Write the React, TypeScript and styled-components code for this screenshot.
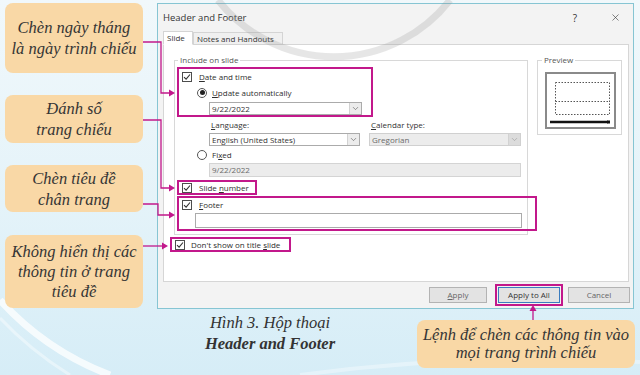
import React from "react";
import styled, { createGlobalStyle } from "styled-components";
import { ChevronDown, X } from "lucide-react";

const GlobalStyle = createGlobalStyle`
  html, body {
    margin: 0;
    padding: 0;
  }
  body {
    width: 640px;
    height: 375px;
    overflow: hidden;
  }
  * {
    box-sizing: border-box;
  }
`;

const INK = "#c2188b";

const Page = styled.div`
  position: relative;
  width: 640px;
  height: 375px;
  overflow: hidden;
  background: linear-gradient(180deg, #f1f8fb 0%, #e4f3f9 55%, #d6edf7 100%);
  font-family: "Open Sans", "Noto Sans", sans-serif;
`;

const Decor = styled.svg<{ $top?: boolean }>`
  position: absolute;
  left: 0;
  top: 0;
  width: 640px;
  height: 375px;
  pointer-events: none;
  z-index: ${(p) => (p.$top ? 2 : 0)};
`;

const Content = styled.div`
  position: relative;
  z-index: 1;
  display: flex;
  flex-direction: column;
  padding-top: 3px;
`;

const TopRow = styled.div`
  display: flex;
  align-items: flex-start;
`;

const CalloutColumn = styled.div`
  display: flex;
  flex-direction: column;
  width: 138px;
  margin-left: 5px;
  margin-right: 14px;
`;

const Callout = styled.div<{ $h: number; $mt?: number; $lh?: number }>`
  height: ${(p) => p.$h}px;
  margin-top: ${(p) => p.$mt ?? 0}px;
  background: #f9d8a6;
  border-radius: 8px;
  display: flex;
  align-items: center;
  justify-content: center;
  text-align: center;
  font-family: "Liberation Serif", "DejaVu Serif", serif;
  font-style: italic;
  font-size: 16.5px;
  line-height: ${(p) => p.$lh ?? 21}px;
  color: #353535;
`;

/* ---------- dialog ---------- */

const Dialog = styled.div`
  width: 477px;
  height: 306px;
  background: #f3f3f3;
  border: 1px solid #86c5d3;
  display: flex;
  flex-direction: column;
  color: #2e2e2e;
  font-size: 8px;
  line-height: 10px;
`;

const TitleBar = styled.div`
  height: 27px;
  flex: none;
  display: flex;
  align-items: center;
  padding-left: 5px;
  font-size: 9.5px;
  color: #333;
`;

const TitleText = styled.span`
  flex: 1;
`;

const TitleButton = styled.span<{ $mr: number }>`
  width: 30px;
  height: 20px;
  margin-right: ${(p) => p.$mr}px;
  display: flex;
  align-items: center;
  justify-content: center;
  font-size: 10px;
  color: #333;
`;

const TabRow = styled.div`
  display: flex;
  height: 14px;
  margin-left: 5px;
  margin-bottom: -1px;
  align-items: flex-end;
`;

const Tab = styled.div<{ $active?: boolean; $w: number }>`
  position: relative;
  z-index: ${(p) => (p.$active ? 1 : 0)};
  width: ${(p) => p.$w}px;
  height: ${(p) => (p.$active ? 14 : 13)}px;
  background: ${(p) => (p.$active ? "#fff" : "#f0f0f0")};
  border: 1px solid #d4d4d4;
  border-bottom-color: ${(p) => (p.$active ? "#fff" : "#d4d4d4")};
  display: flex;
  align-items: center;
  padding-left: 3px;
  color: #333;
`;

const Panel = styled.div`
  height: 238px;
  margin: 0 4px 0 5px;
  background: #fff;
  border: 1px solid #d6d6d6;
  padding: 10px 0 0 10px;
  display: flex;
  flex-direction: column;
`;

const GroupRow = styled.div`
  display: flex;
  align-items: flex-start;
`;

const Group = styled.fieldset<{ $w: number; $pl: number; $pb: number }>`
  margin: 0;
  min-width: 0;
  width: ${(p) => p.$w}px;
  padding: 2px 0 ${(p) => p.$pb}px ${(p) => p.$pl}px;
  border: 1px solid #d8d8d8;
`;

const Legend = styled.legend`
  margin-left: 1px;
  padding: 0 2px;
  font-size: 8px;
  line-height: 10px;
  color: #555;
`;

const Highlight = styled.div<{ $w: number; $mt?: number; $ml?: number; $pad?: string }>`
  width: ${(p) => p.$w}px;
  margin-top: ${(p) => p.$mt ?? 0}px;
  margin-left: ${(p) => p.$ml ?? 0}px;
  padding: ${(p) => p.$pad ?? "0 0 0 3px"};
  border: 2px solid ${INK};
`;

const Row = styled.div<{ $gap: number; $ml?: number; $mt?: number }>`
  display: flex;
  align-items: center;
  height: 11px;
  gap: ${(p) => p.$gap}px;
  margin-left: ${(p) => p.$ml ?? 0}px;
  margin-top: ${(p) => p.$mt ?? 0}px;
  white-space: nowrap;
`;

const Box = styled.span`
  width: 10px;
  height: 10px;
  flex: none;
  border: 1px solid #4d4d4d;
  background: #fff;
  display: flex;
  align-items: center;
  justify-content: center;
`;

const Radio = styled.span<{ $on?: boolean }>`
  width: 10px;
  height: 10px;
  flex: none;
  border-radius: 50%;
  border: 1px solid #555;
  background: #fff;
  display: flex;
  align-items: center;
  justify-content: center;
  &::after {
    content: "";
    display: ${(p) => (p.$on ? "block" : "none")};
    width: 5px;
    height: 5px;
    border-radius: 50%;
    background: #222;
  }
`;

const FieldGrid = styled.div<{ $mt: number }>`
  display: grid;
  grid-template-columns: 151px 152px;
  column-gap: 9px;
  row-gap: 3px;
  margin-left: 32px;
  margin-top: ${(p) => p.$mt}px;
`;

const FieldLabel = styled.span`
  height: 10px;
  padding-left: 2px;
  color: #333;
`;

const Select = styled.div<{ $w?: number; $off?: boolean; $ml?: number; $mt?: number }>`
  width: ${(p) => (p.$w ? `${p.$w}px` : "auto")};
  height: 13px;
  margin-left: ${(p) => p.$ml ?? 0}px;
  margin-top: ${(p) => p.$mt ?? 0}px;
  border: 1px solid ${(p) => (p.$off ? "#d0d0d0" : "#ababab")};
  background: ${(p) => (p.$off ? "#ececec" : "#fff")};
  color: ${(p) => (p.$off ? "#6a6a6a" : "#333")};
  display: flex;
  align-items: center;
  padding-left: 2px;
`;

const SelectText = styled.span`
  flex: 1;
`;

const Chevron = styled.span<{ $off?: boolean }>`
  width: 12px;
  height: 100%;
  flex: none;
  display: flex;
  align-items: center;
  justify-content: center;
  border-left: 1px solid #d2d2d2;
  background: ${(p) => (p.$off ? "#dcdcdc" : "#ececec")};
  color: ${(p) => (p.$off ? "#9a9a9a" : "#555")};
`;

const TextBox = styled.div<{ $w: number; $h: number; $ml: number; $mt: number; $off?: boolean }>`
  width: ${(p) => p.$w}px;
  height: ${(p) => p.$h}px;
  margin-left: ${(p) => p.$ml}px;
  margin-top: ${(p) => p.$mt}px;
  border: 1px solid ${(p) => (p.$off ? "#d4d4d4" : "#ababab")};
  background: ${(p) => (p.$off ? "#ececec" : "#fff")};
  color: #6a6a6a;
  padding-left: 2px;
  display: flex;
  align-items: center;
`;

const PreviewArt = styled.svg`
  display: block;
  margin: 5px 0 0 4px;
`;

const ButtonBar = styled.div`
  flex: 1;
  display: flex;
  align-items: center;
  justify-content: flex-end;
  padding-right: 3px;
`;

const Button = styled.div<{ $w: number; $default?: boolean; $mr?: number }>`
  width: ${(p) => p.$w}px;
  height: 16px;
  margin-right: ${(p) => p.$mr ?? 0}px;
  border: 1px solid ${(p) => (p.$default ? "#3b7dbf" : "#b3b3b3")};
  background: #e3e3e3;
  display: flex;
  align-items: center;
  justify-content: center;
  color: ${(p) => (p.$default ? "#333" : "#666")};
`;

/* ---------- bottom row ---------- */

const BottomRow = styled.div`
  display: flex;
  align-items: flex-start;
`;

const Caption = styled.div`
  width: 226px;
  margin-left: 157px;
  margin-top: 3px;
  text-align: center;
  font-family: "Liberation Serif", "DejaVu Serif", serif;
  font-style: italic;
  font-size: 16.5px;
  line-height: 21px;
  color: #333;
  b {
    font-weight: 700;
  }
`;

const CommandCallout = styled(Callout)`
  width: 218px;
  margin-left: auto;
  margin-right: 5px;
`;

function CheckBox() {
  return (
    <Box>
      <svg width="8" height="8" viewBox="0 0 8 8">
        <path d="M1 4.2 L3.1 6.2 L7 1.5" fill="none" stroke="#333" strokeWidth="1.1" />
      </svg>
    </Box>
  );
}

function Dropdown({ text, w, off, ml, mt }: { text: string; w?: number; off?: boolean; ml?: number; mt?: number }) {
  return (
    <Select $w={w} $off={off} $ml={ml} $mt={mt}>
      <SelectText>{text}</SelectText>
      <Chevron $off={off}>
        <ChevronDown size={9} strokeWidth={1.6} />
      </Chevron>
    </Select>
  );
}

const arrowRight = (x: number, y: number) => `${x},${y} ${x - 6},${y - 3.5} ${x - 6},${y + 3.5}`;

export default function App() {
  return (
    <Page>
      <GlobalStyle />
      <Decor viewBox="0 0 640 375">
        <path d="M0 300 Q45 350 110 375" fill="none" stroke="#fff" strokeWidth="7" opacity="0.75" />
        <path d="M0 318 Q30 350 70 375" fill="none" stroke="#fff" strokeWidth="3" opacity="0.4" />
        <path d="M300 375 Q470 352 640 362" fill="none" stroke="#fff" strokeWidth="4" opacity="0.35" />
      </Decor>

      <Content>
        <TopRow>
          <CalloutColumn>
            <Callout $h={70}>
              Chèn ngày tháng
              <br />
              là ngày trình chiếu
            </Callout>
            <Callout $h={48} $mt={22}>
              Đánh số
              <br />
              trang chiếu
            </Callout>
            <Callout $h={47} $mt={22}>
              Chèn tiêu đề
              <br />
              chân trang
            </Callout>
            <Callout $h={73} $mt={23} $lh={20}>
              Không hiển thị các
              <br />
              thông tin ở trang
              <br />
              tiêu đề
            </Callout>
          </CalloutColumn>

          <Dialog>
            <TitleBar>
              <TitleText>Header and Footer</TitleText>
              <TitleButton $mr={10}>?</TitleButton>
              <TitleButton $mr={3}>
                <X size={11} strokeWidth={1.3} />
              </TitleButton>
            </TitleBar>

            <TabRow>
              <Tab $active $w={30}>Slide</Tab>
              <Tab $w={90}>Notes and Handouts</Tab>
            </TabRow>

            <Panel>
              <GroupRow>
                <Group $w={354} $pl={2} $pb={3}>
                  <Legend>Include on slide</Legend>

                  <Highlight $w={196} $pad="2px 0 0 3px">
                    <Row $gap={7}>
                      <CheckBox />
                      <span>
                        <u>D</u>ate and time
                      </span>
                    </Row>
                    <Row $gap={5} $ml={15} $mt={5}>
                      <Radio $on />
                      <span>
                        <u>U</u>pdate automatically
                      </span>
                    </Row>
                    <Dropdown text="9/22/2022" w={153} ml={27} mt={4} />
                  </Highlight>

                  <FieldGrid $mt={3}>
                    <FieldLabel>
                      <u>L</u>anguage:
                    </FieldLabel>
                    <FieldLabel>
                      <u>C</u>alendar type:
                    </FieldLabel>
                    <Dropdown text="English (United States)" />
                    <Dropdown text="Gregorian" off />
                  </FieldGrid>

                  <Row $gap={5} $ml={20} $mt={3}>
                    <Radio />
                    <span>
                      Fi<u>x</u>ed
                    </span>
                  </Row>
                  <TextBox $w={312} $h={14} $ml={32} $mt={3} $off>
                    9/22/2022
                  </TextBox>

                  <Highlight $w={80} $mt={3}>
                    <Row $gap={7}>
                      <CheckBox />
                      <span>
                        Slide <u>n</u>umber
                      </span>
                    </Row>
                  </Highlight>

                  <Highlight $w={360} $mt={1} $pad="1px 0 1px 3px">
                    <Row $gap={7}>
                      <CheckBox />
                      <span>
                        <u>F</u>ooter
                      </span>
                    </Row>
                    <TextBox $w={327} $h={15} $ml={13} $mt={3} />
                  </Highlight>
                </Group>

                <Group $w={85} $pl={3} $pb={5} style={{ marginLeft: 9 }}>
                  <Legend>Preview</Legend>
                  <PreviewArt width="71" height="57" viewBox="0 0 71 57">
                    <rect x="1" y="1" width="69" height="55" fill="#fff" stroke="#8a8a8a" strokeWidth="2" />
                    <rect
                      x="10.5"
                      y="10.5"
                      width="54"
                      height="32"
                      fill="none"
                      stroke="#555"
                      strokeWidth="1"
                      strokeDasharray="1.5 1.5"
                    />
                    <path d="M10.5 29.5 H64.5" stroke="#555" strokeWidth="1" strokeDasharray="1.5 1.5" />
                    <path d="M5 50 H63" stroke="#111" strokeWidth="2.5" />
                    <rect x="62" y="48.5" width="3" height="3" fill="#111" />
                  </PreviewArt>
                </Group>
              </GroupRow>

              <Highlight $w={121} $mt={2} $ml={-4}>
                <Row $gap={6}>
                  <CheckBox />
                  <span>
                    Don't show on title <u>s</u>lide
                  </span>
                </Row>
              </Highlight>
            </Panel>

            <ButtonBar>
              <Button $w={58} $mr={8}>
                <span>
                  <u>A</u>pply
                </span>
              </Button>
              <Highlight $w={68} $pad="1px" $mt={0}>
                <Button $w={62} $default>
                  Apply to All
                </Button>
              </Highlight>
              <Button $w={62} style={{ marginLeft: 5 }}>
                Cancel
              </Button>
            </ButtonBar>
          </Dialog>
        </TopRow>

        <BottomRow>
          <Caption>
            Hình 3. Hộp thoại
            <br />
            <b>Header and Footer</b>
          </Caption>
          <CommandCallout $h={48} $mt={11} $lh={18}>
            Lệnh để chèn các thông tin vào
            <br />
            mọi trang trình chiếu
          </CommandCallout>
        </BottomRow>
      </Content>

      <Decor $top viewBox="0 0 640 375">
        <path d="M218 0 A147 147 0 0 0 450 0" fill="none" stroke="#8c8c8c" strokeWidth="7" opacity="0.22" />
        <g fill="none" stroke={INK} strokeWidth="1.3">
          <path d="M143 42 H161 V93 H170" />
          <path d="M143 120 H161 V188 H170" />
          <path d="M143 204 H158 V215 H170" />
          <path d="M143 246 H163" />
          <path d="M533 320 V310" />
        </g>
        <g fill={INK}>
          <polygon points={arrowRight(175, 93)} />
          <polygon points={arrowRight(175, 188)} />
          <polygon points={arrowRight(175, 215)} />
          <polygon points={arrowRight(168, 246)} />
          <polygon points="533,305 529.5,311 536.5,311" />
        </g>
      </Decor>
    </Page>
  );
}
